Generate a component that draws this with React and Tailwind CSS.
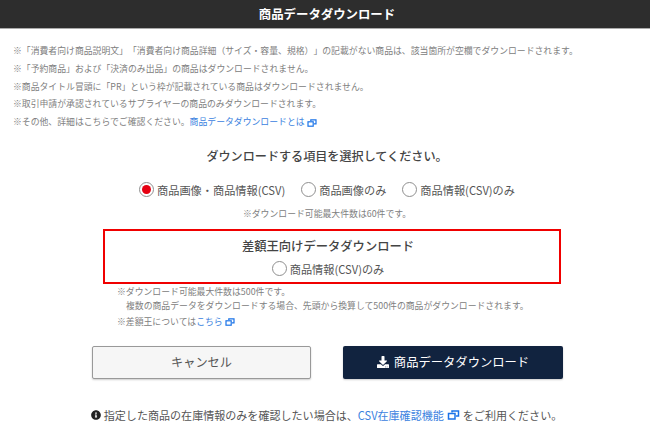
import { FaDownload, FaInfoCircle } from "react-icons/fa";

const notes = [
  "※「消費者向け商品説明文」「消費者向け商品詳細（サイズ・容量、規格）」の記載がない商品は、該当箇所が空欄でダウンロードされます。",
  "※「予約商品」および「決済のみ出品」の商品はダウンロードされません。",
  "※商品タイトル冒頭に「PR」という枠が記載されている商品はダウンロードされません。",
  "※取引申請が承認されているサプライヤーの商品のみダウンロードされます。",
];

const Radio = ({ checked, label }) => (
  <label className="flex items-center gap-[3px] text-[11.2px] leading-[16px] text-[#555]">
    <span className="flex h-[15px] w-[15px] items-center justify-center rounded-full border-[1.5px] border-[#8f8f8f] bg-white">
      {checked && <span className="h-[9px] w-[9px] rounded-full bg-[#e60012]" />}
    </span>
    {label}
  </label>
);

// two overlapping outlined windows, the front one lower left
const LinkIcon = ({ className }) => (
  <svg viewBox="0 0 12 10" className={`inline-block fill-none stroke-[#1a73e8] ${className}`}>
    <path d="M4.5 2.5V1h6.5v5H8.5" strokeWidth="1.5" />
    <rect x="1" y="3.5" width="6.5" height="5.5" strokeWidth="1.5" />
  </svg>
);

export default function App() {
  return (
    <div
      className="h-[438px] w-[650px] overflow-hidden bg-white text-[#555] [text-spacing-trim:space-all]"
      style={{ fontFamily: '"Noto Sans CJK JP", sans-serif' }}
    >
      {/* Header */}
      <div className="flex h-[29px] items-center justify-center border-b border-[#aaa] bg-[#2d2d2d] pl-[4px] text-[12.4px] font-bold text-white">
        商品データダウンロード
      </div>

      {/* Notes */}
      <div className="pl-[13px] pt-[13px] text-[8.85px] leading-[17.75px] text-[#808080]">
        {notes.map((n) => (
          <div key={n}>{n}</div>
        ))}
        <div>
          ※その他、詳細はこちらでご確認ください。
          <a className="text-[#3b82e0]">商品データダウンロードとは</a>
          <LinkIcon className="ml-[2px] h-[8px] w-[10px]" />
        </div>
      </div>

      <div className="mt-[16px] pl-[4px] text-center text-[12.1px] font-medium leading-[18px] text-[#444]">
        ダウンロードする項目を選択してください。
      </div>

      <div className="mt-[17px] flex justify-center gap-[16px] pl-[4px]">
        <Radio checked label="商品画像・商品情報(CSV)" />
        <Radio label="商品画像のみ" />
        <Radio label="商品情報(CSV)のみ" />
      </div>

      <div className="mt-[9px] pl-[4px] text-center text-[8.85px] leading-[14px] text-[#808080]">
        ※ダウンロード可能最大件数は60件です。
      </div>

      {/* Sagakuo box */}
      <div className="ml-[103px] mt-[8px] flex h-[55px] w-[458px] flex-col items-center border-2 border-[#f00000] pr-[8px] pt-[6px]">
        <div className="text-[12.3px] font-medium leading-[18px] text-[#444]">差額王向けデータダウンロード</div>
        <div className="mt-[6px]">
          <Radio label="商品情報(CSV)のみ" />
        </div>
      </div>

      <div className="pl-[117px] pt-[1px] text-[8.85px] text-[#808080]">
        <div className="leading-[14px]">※ダウンロード可能最大件数は500件です。</div>
        <div className="pl-[9px] leading-[14px]">
          複数の商品データをダウンロードする場合、先頭から換算して500件の商品がダウンロードされます。
        </div>
        <div className="mt-[2px] leading-[14px]">
          ※差額王については<a className="text-[#3b82e0]">こちら</a>
          <LinkIcon className="ml-[2px] h-[8px] w-[10px]" />
        </div>
      </div>

      {/* Buttons */}
      <div className="ml-[92px] mt-[17px] flex gap-[32px]">
        <button className="flex h-[33px] w-[219px] items-center justify-center rounded-[2px] border border-[#999] bg-[#f6f6f6] text-[12.2px] text-[#555] shadow-[0_1px_2px_rgba(0,0,0,0.2)]">
          キャンセル
        </button>
        <button className="flex h-[33px] w-[220px] items-center justify-center gap-[5px] rounded-[2px] bg-[#11233f] text-[12.3px] text-white shadow-[0_1px_2px_rgba(0,0,0,0.2)]">
          <FaDownload className="text-[12px]" />
          商品データダウンロード
        </button>
      </div>

      {/* Footer */}
      <div className="mt-[28px] flex items-center justify-center pl-[3px] text-[11.05px] leading-[16px] text-[#555]">
        <FaInfoCircle className="mr-[3px] text-[10px] text-[#222]" />
        指定した商品の在庫情報のみを確認したい場合は、
        <a className="text-[#3b82e0]">CSV在庫確認機能</a>
        <LinkIcon className="mx-[3px] h-[10px] w-[13px]" />
        をご利用ください。
      </div>
    </div>
  );
}
